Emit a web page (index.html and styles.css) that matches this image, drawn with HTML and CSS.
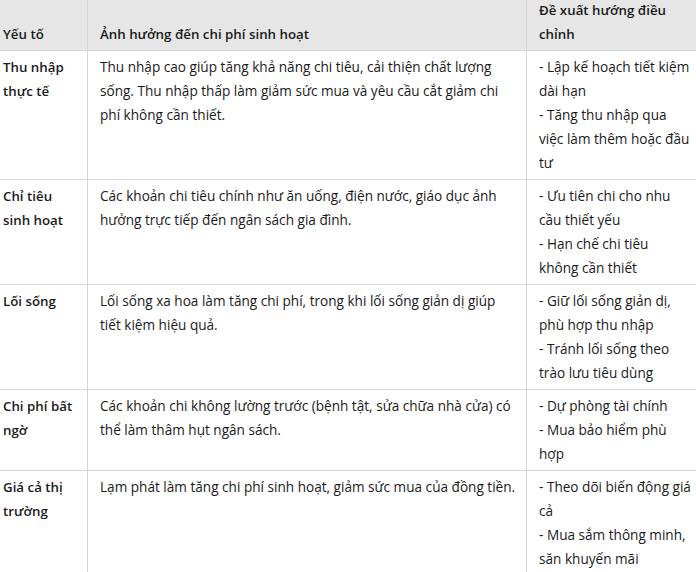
FILE: index.html
```html
<!DOCTYPE html>
<html lang="vi">
<head>
  <meta charset="UTF-8" />
  <meta name="viewport" content="width=device-width, initial-scale=1.0" />
  <title>Các yếu tố ảnh hưởng đến chi phí sinh hoạt</title>
  <link rel="stylesheet" href="styles.css">
</head>
<body>
  <div class="table-wrap">
    <table class="cost-table">
      <thead>
        <tr>
          <th class="col-factor">Yếu tố</th>
          <th class="col-effect">Ảnh hưởng đến chi phí sinh hoạt</th>
          <th class="col-advice">Đề xuất hướng điều chỉnh</th>
        </tr>
      </thead>
      <tbody>
        <tr>
          <td><strong>Thu nhập thực tế</strong></td>
          <td>Thu nhập cao giúp tăng khả năng chi tiêu, cải thiện chất lượng sống. Thu nhập thấp làm giảm sức mua và yêu cầu cắt giảm chi phí không cần thiết.</td>
          <td>- Lập kế hoạch tiết kiệm dài hạn<br>- Tăng thu nhập qua việc làm thêm hoặc đầu tư</td>
        </tr>
        <tr>
          <td><strong>Chỉ tiêu sinh hoạt</strong></td>
          <td>Các khoản chi tiêu chính như ăn uống, điện nước, giáo dục ảnh hưởng trực tiếp đến ngân sách gia đình.</td>
          <td>- Ưu tiên chi cho nhu cầu thiết yếu<br>- Hạn chế chi tiêu không cần thiết</td>
        </tr>
        <tr>
          <td><strong>Lối sống</strong></td>
          <td>Lối sống xa hoa làm tăng chi phí, trong khi lối sống giản dị giúp tiết kiệm hiệu quả.</td>
          <td>- Giữ lối sống giản dị, phù hợp thu nhập<br>- Tránh lối sống theo trào lưu tiêu dùng</td>
        </tr>
        <tr>
          <td><strong>Chi phí bất ngờ</strong></td>
          <td>Các khoản chi không lường trước (bệnh tật, sửa chữa nhà cửa) có thể làm thâm hụt ngân sách.</td>
          <td>- Dự phòng tài chính<br>- Mua bảo hiểm phù hợp</td>
        </tr>
        <tr>
          <td><strong>Giá cả thị trường</strong></td>
          <td>Lạm phát làm tăng chi phí sinh hoạt, giảm sức mua của đồng tiền.</td>
          <td>- Theo dõi biến động giá cả<br>- Mua sắm thông minh, săn khuyến mãi</td>
        </tr>
      </tbody>
    </table>
  </div>
</body>
</html>
```

FILE: styles.css
```css
body {
  margin: 0;
  font-family: "Open Sans", "Noto Sans", sans-serif;
  font-size: 13.6px;
  color: #1a1a1a;
  background: #fff;
  overflow: hidden;
}

.table-wrap {
  margin: -6px 0 0 -9px;
}

.cost-table {
  border-collapse: collapse;
  table-layout: fixed;
  width: 709px;
  line-height: 24px;
}

.cost-table th,
.cost-table td {
  padding: 4px 8px 4px 12px;
  text-align: left;
  vertical-align: top;
  border-bottom: 1px solid #d6d6d6;
  border-right: 1px solid #d6d6d6;
}

.cost-table th {
  background: #e6e6e6;
  font-size: 13.3px;
  font-weight: 600;
  vertical-align: bottom;
}

.cost-table td strong {
  font-size: 13.3px;
  font-weight: 600;
}

.col-factor {
  width: 76px;
}

.col-effect {
  width: 418px;
}

.col-advice {
  width: 152px;
}
```
